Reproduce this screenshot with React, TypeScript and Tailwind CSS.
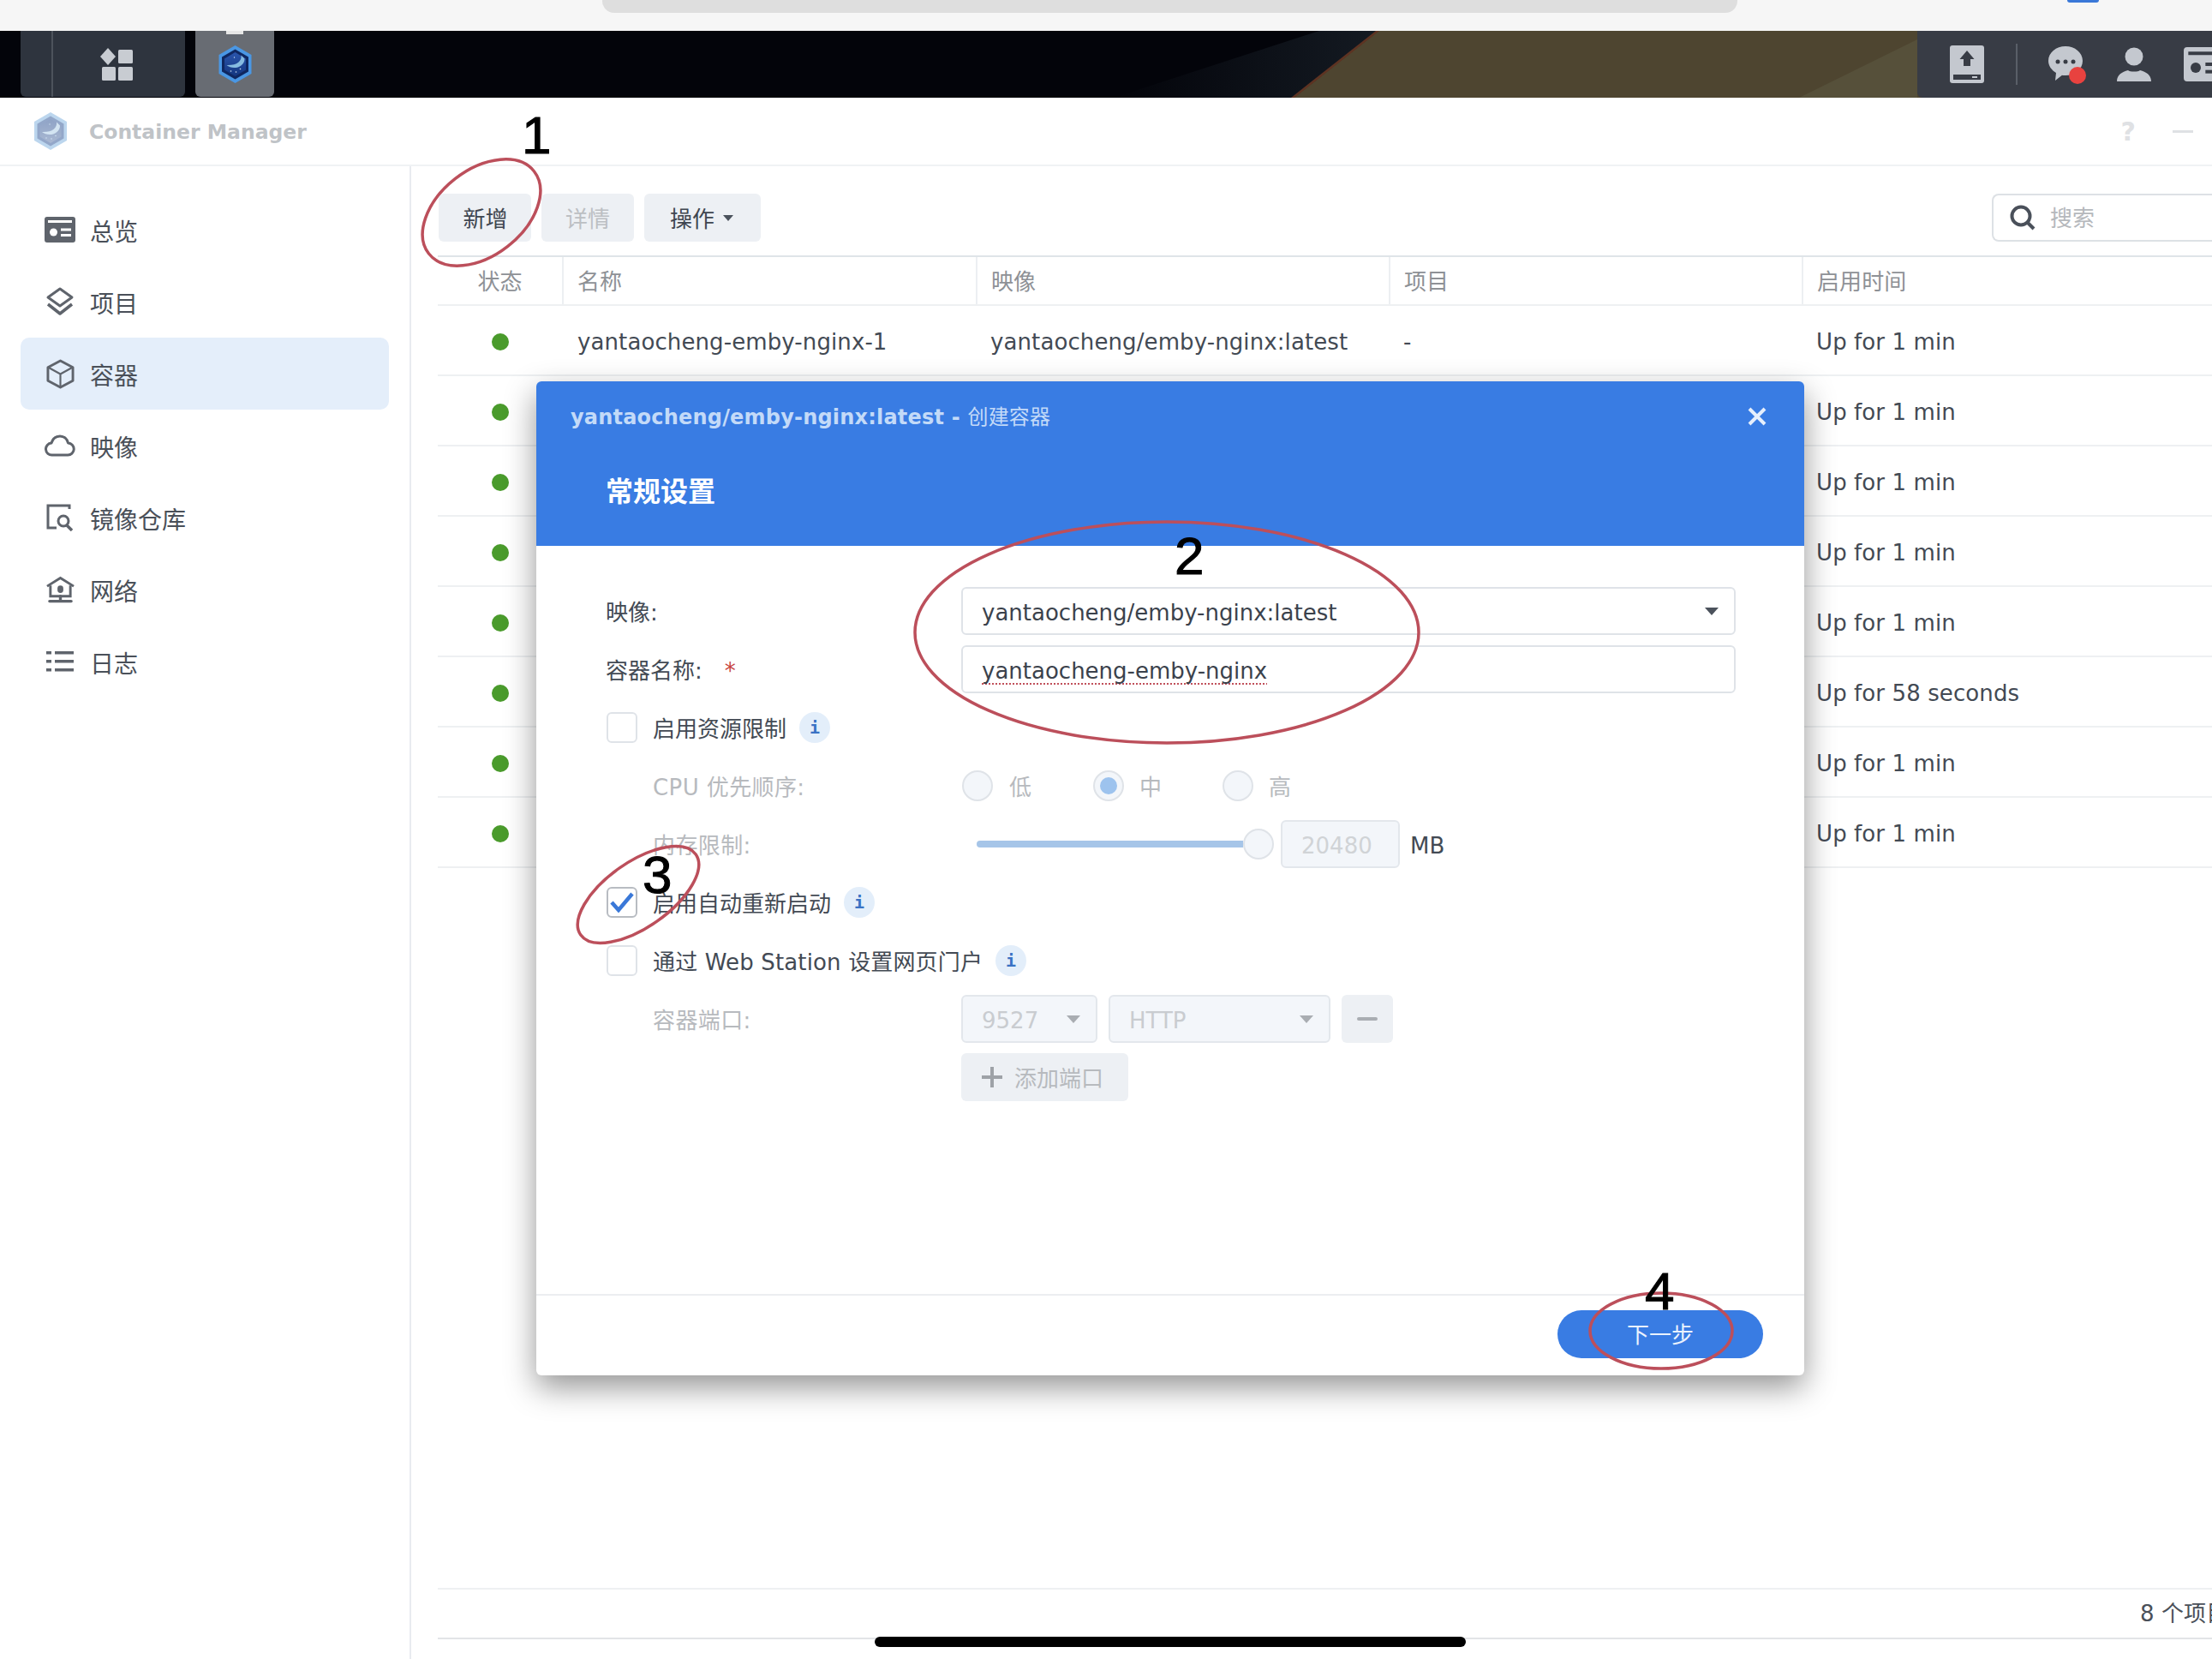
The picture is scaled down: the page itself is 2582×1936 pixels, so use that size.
import React from 'react';

const FONT = '[font-family:"DejaVu_Sans","Noto_Sans_CJK_SC",sans-serif]';

const rows = [
  { name: 'yantaocheng-emby-nginx-1', image: 'yantaocheng/emby-nginx:latest', project: '-', time: 'Up for 1 min' },
  { time: 'Up for 1 min' },
  { time: 'Up for 1 min' },
  { time: 'Up for 1 min' },
  { time: 'Up for 1 min' },
  { time: 'Up for 58 seconds' },
  { time: 'Up for 1 min' },
  { time: 'Up for 1 min' },
];

const AppLogo = ({ className, dim }: { className?: string; dim?: boolean }) => (
  <svg viewBox="0 0 40 44" className={className}>
    <defs>
      <linearGradient id={dim ? 'hexDim' : 'hexFull'} x1="0" y1="0" x2="0" y2="1">
        <stop offset="0" stopColor={dim ? '#8fa3c6' : '#2a55ac'} />
        <stop offset="1" stopColor={dim ? '#a9b8d2' : '#14367f'} />
      </linearGradient>
    </defs>
    <path d="M20 0 39 11v22L20 44 1 33V11Z" fill={dim ? '#bcd6ee' : '#4a97e4'} />
    <path d="M20 4.500 35.500 13.500v17L20 39.500 4.500 30.500v-17Z" fill={dim ? '#93a7c9' : '#0f2760'} />
    <path d="M20 8 32.500 15.500v13L20 36 7.500 28.500v-13Z" fill={`url(#${dim ? 'hexDim' : 'hexFull'})`} />
    <path d="M27 11.500c1 7-5 12-17 11.500 7 6 21 3 21-7.500Z" fill={dim ? '#d3e4f2' : '#86bbe0'} />
    <circle cx="15" cy="30" r="0.800" fill="#cfe2f2" />
    <circle cx="21" cy="31" r="0.800" fill="#cfe2f2" />
    <circle cx="26" cy="27.500" r="0.800" fill="#cfe2f2" />
    <circle cx="19" cy="14" r="0.700" fill="#cfe2f2" />
  </svg>
);

const CardIcon = ({ className, cut }: { className?: string; cut: string }) => (
  <svg viewBox="0 0 36 30" className={className} fill="currentColor">
    <path
      fillRule="evenodd"
      d="M3 0h30a3 3 0 0 1 3 3v24a3 3 0 0 1-3 3H3a3 3 0 0 1-3-3V3a3 3 0 0 1 3-3Zm1 4v3h28V4Z"
    />
    <circle cx="10.500" cy="18" r="4.500" fill={cut} />
    <rect x="19" y="13.500" width="12" height="3" fill={cut} />
    <rect x="19" y="20" width="12" height="3" fill={cut} />
  </svg>
);

const sideIcons: Record<string, React.ReactNode> = {
  overview: <CardIcon className="w-[36px] h-[30px]" cut="#ffffff" />,
  project: (
    <svg viewBox="0 0 34 34" className="w-[34px] h-[34px]" fill="none" stroke="currentColor" strokeWidth="3" strokeLinejoin="round">
      <path d="M17 2 31 12 17 22 3 12Z" />
      <path d="M3 20l14 11 14-11" strokeWidth="3.500" />
    </svg>
  ),
  container: (
    <svg viewBox="0 0 34 36" className="w-[33px] h-[35px]" fill="none" stroke="currentColor" strokeWidth="3" strokeLinejoin="round">
      <path d="M17 2 32 10v16l-15 8-15-8V10Z" />
      <path d="M2.500 10 17 18l14.500-8M17 18v16" strokeWidth="2.200" />
    </svg>
  ),
  image: (
    <svg viewBox="0 0 36 26" className="w-[36px] h-[26px]" fill="none" stroke="currentColor" strokeWidth="3" strokeLinejoin="round">
      <path d="M9 24a7 7 0 0 1-1-14C9.500 5 13.500 2 18 2c4.800 0 8.500 3.300 9.500 8a7 7 0 0 1-.5 14Z" />
    </svg>
  ),
  registry: (
    <svg viewBox="0 0 32 32" className="w-[32px] h-[32px]" fill="none" stroke="currentColor" strokeWidth="3">
      <path d="M27 6V2H2v26h10" />
      <circle cx="20" cy="20" r="6" />
      <path d="m24 25 6 6" strokeWidth="3.500" />
    </svg>
  ),
  network: (
    <svg viewBox="0 0 34 32" className="w-[33px] h-[32px]" fill="none" stroke="currentColor" strokeWidth="3">
      <path d="M1 12 17 2l16 10" />
      <path d="M5 11v13h24V11" />
      <rect x="13.500" y="11" width="7" height="9" rx="3.500" fill="currentColor" stroke="none" />
      <path d="M17 24v5M4 30h26" strokeWidth="3.500" strokeLinecap="round" />
    </svg>
  ),
  log: (
    <svg viewBox="0 0 32 24" className="w-[32px] h-[24px]" fill="currentColor">
      <rect x="0" y="0" width="6" height="3.500" />
      <rect x="10" y="0" width="22" height="3.500" />
      <rect x="0" y="10" width="6" height="3.500" />
      <rect x="10" y="10" width="22" height="3.500" />
      <rect x="0" y="20" width="6" height="3.500" />
      <rect x="10" y="20" width="22" height="3.500" />
    </svg>
  ),
};

const sideItems = [
  { key: 'overview', label: '总览' },
  { key: 'project', label: '项目' },
  { key: 'container', label: '容器', active: true },
  { key: 'image', label: '映像' },
  { key: 'registry', label: '镜像仓库' },
  { key: 'network', label: '网络' },
  { key: 'log', label: '日志' },
];

const InfoDot = () => (
  <span className="w-[36px] h-[36px] -ml-[3px] rounded-full bg-[#e3eefa] flex items-center justify-center text-[#3a72c4] text-[20px] font-bold [font-family:'DejaVu_Sans_Mono',monospace]">
    i
  </span>
);

const Checkbox = ({ checked }: { checked?: boolean }) => (
  <span
    className={`w-[36px] h-[36px] ml-[1px] shrink-0 rounded-[6px] border-2 bg-white flex items-center justify-center ${
      checked ? 'border-[#b8bcc2]' : 'border-[#dfe3e8]'
    }`}
  >
    {checked && (
      <svg viewBox="0 0 28 24" className="w-[28px] h-[24px]" fill="none" stroke="#3a78d8" strokeWidth="4.500">
        <path d="m2 12 8 9L26 2" />
      </svg>
    )}
  </span>
);

const Radio = ({ on }: { on?: boolean }) => (
  <span className="w-[36px] h-[36px] rounded-full border-2 border-[#dfe3e8] bg-[#f3f6fa] flex items-center justify-center">
    {on && <span className="w-[20px] h-[20px] rounded-full bg-[#9dc3ee]" />}
  </span>
);

const Caret = ({ color }: { color: string }) => (
  <svg viewBox="0 0 16 9" className="w-[16px] h-[9px]">
    <path d="M0 0h16L8 9Z" fill={color} />
  </svg>
);

const Row = ({ label, indent, children }: { label?: React.ReactNode; indent?: boolean; children?: React.ReactNode }) => (
  <div className="h-[56px] flex items-center">
    <div className={`w-[415px] shrink-0 pt-[4px] ${indent ? 'pl-[55px] text-[#b7babe] tracking-[0.4px]' : ''}`}>{label}</div>
    {children}
  </div>
);

const DisabledSelect = ({ value, width }: { value: string; width: string }) => (
  <div className={`${width} h-[56px] rounded-[6px] border-2 border-[#e3e7ec] bg-[#f3f6fa] pl-[22px] pr-[18px] flex items-center justify-between text-[#c9ccd0]`}>
    <span className="pt-[4px]">{value}</span>
    <Caret color="#a9adb2" />
  </div>
);

const Modal = () => (
  <div className="absolute left-[626px] top-[445px] w-[1480px] h-[1160px] rounded-[6px] bg-white shadow-[0_14px_36px_rgba(0,0,0,0.42)] flex flex-col overflow-hidden text-[26px] text-[#434a54]">
    <div className="h-[192px] shrink-0 bg-[#397ce3] relative px-[40px] pt-[27px]">
      <div className="text-[#c3daf8] text-[24px] font-bold leading-[30px] tracking-[0.2px]">
        yantaocheng/emby-nginx:latest - <span className="font-normal">创建容器</span>
      </div>
      <div className="text-white text-[32px] font-bold leading-[40px] mt-[52px] ml-[41px]">常规设置</div>
      <svg viewBox="0 0 22 22" className="absolute right-[44px] top-[30px] w-[22px] h-[22px]" stroke="#e6effc" strokeWidth="4">
        <path d="M2 2l18 18M20 2 2 20" />
      </svg>
    </div>

    <div className="flex-1 pt-[48px] pl-[81px] pr-[80px] flex flex-col gap-[12px]">
      <Row label="映像:">
        <div className="flex-1 h-[56px] rounded-[6px] border-2 border-[#dfe3e8] pl-[22px] pr-[18px] flex items-center justify-between text-[#3b424c]">
          <span className="pt-[4px]">yantaocheng/emby-nginx:latest</span>
          <Caret color="#4b525c" />
        </div>
      </Row>
      <Row label={<>容器名称:<span className="text-[#c8453f] ml-[26px]">*</span></>}>
        <div className="flex-1 h-[56px] rounded-[6px] border-2 border-[#dfe3e8] pl-[22px] flex items-center text-[#3b424c]">
          <span className="pt-[4px] underline decoration-dotted decoration-[#c0505a] decoration-2 underline-offset-[6px]">yantaocheng-emby-nginx</span>
        </div>
      </Row>
      <div className="h-[56px] flex items-center gap-[18px]">
        <Checkbox />
        <span className="pt-[4px]">启用资源限制</span>
        <InfoDot />
      </div>
      <Row indent label="CPU 优先顺序:">
        <div className="flex items-center pl-[1px] text-[#b7babe]">
          <Radio />
          <span className="ml-[19px] w-[98px] pt-[4px]">低</span>
          <Radio on />
          <span className="ml-[18px] w-[97px] pt-[4px]">中</span>
          <Radio />
          <span className="ml-[18px] pt-[4px]">高</span>
        </div>
      </Row>
      <Row indent label="内存限制:">
        <div className="flex items-center pl-[18px]">
          <div className="w-[311px] h-[8px] rounded-l-full bg-[#a6c5e8]" />
          <span className="w-[36px] h-[36px] rounded-full border-2 border-[#dfe3e8] bg-[#f3f6fa]" />
          <div className="ml-[8px] w-[139px] h-[56px] rounded-[6px] border-2 border-[#e3e7ec] bg-[#f3f6fa] pl-[22px] pt-[4px] flex items-center text-[#d0d3d6]">20480</div>
          <span className="ml-[12px] pt-[4px]">MB</span>
        </div>
      </Row>
      <div className="h-[56px] flex items-center gap-[18px]">
        <Checkbox checked />
        <span className="pt-[4px]">启用自动重新启动</span>
        <InfoDot />
      </div>
      <div className="h-[56px] flex items-center gap-[18px]">
        <Checkbox />
        <span className="pt-[4px] tracking-[0.15px]">通过 Web Station 设置网页门户</span>
        <InfoDot />
      </div>
      <Row indent label="容器端口:">
        <div className="flex items-center gap-[13px]">
          <DisabledSelect value="9527" width="w-[159px]" />
          <DisabledSelect value="HTTP" width="w-[259px]" />
          <div className="w-[60px] h-[56px] rounded-[6px] bg-[#edf0f4] flex items-center justify-center">
            <span className="w-[24px] h-[4px] rounded-full bg-[#a9adb2]" />
          </div>
        </div>
      </Row>
      <Row>
        <div className="w-[195px] h-[56px] rounded-[6px] bg-[#edf0f4] pl-[24px] flex items-center gap-[14px] text-[#b7babe]">
          <svg viewBox="0 0 24 24" className="w-[24px] h-[24px]" stroke="#9ea2a7" strokeWidth="4">
            <path d="M12 0v24M0 12h24" />
          </svg>
          <span className="pt-[4px]">添加端口</span>
        </div>
      </Row>
    </div>

    <div className="h-[95px] shrink-0 border-t-2 border-[#eceef1] pb-[4px] flex items-center justify-end pr-[48px]">
      <div className="w-[240px] h-[56px] pt-[3px] rounded-full bg-[#397ce3] text-[#eaf2fd] flex items-center justify-center">下一步</div>
    </div>
  </div>
);

export default function App() {
  return (
    <div className={`relative w-[2582px] h-[1936px] overflow-hidden bg-white flex flex-col ${FONT} text-[26px] text-[#434a54]`}>
      {/* browser bar */}
      <div className="h-[36px] shrink-0 bg-[#f6f6f6] relative">
        <div className="absolute left-[703px] top-0 w-[1325px] h-[15px] rounded-b-[14px] bg-[#dedede]" />
        <div className="absolute left-[2413px] top-0 w-[37px] h-[3px] rounded-b-[3px] bg-[#3a78d8]" />
      </div>

      {/* DSM taskbar */}
      <div className="h-[78px] shrink-0 bg-[#03040a] relative flex">
        {/* wallpaper */}
        <svg className="absolute inset-0 w-full h-full" viewBox="0 0 2582 78" preserveAspectRatio="none">
          <defs>
            <linearGradient id="wallDark" x1="0" y1="0" x2="1" y2="0">
              <stop offset="0" stopColor="#03040a" />
              <stop offset="1" stopColor="#141a22" />
            </linearGradient>
          </defs>
          <path d="M1300 78 1540 0h69l-99 78Z" fill="url(#wallDark)" />
          <path d="M1609 0H2582V78H1510Z" fill="#4e4530" />
          <path d="M1507 78 1606 0h4l-99 78Z" fill="#5e3322" />
          <path d="M2100 78 2238 10v68Z" fill="#56503a" />
        </svg>
        <div className="relative ml-[24px] w-[192px] h-[77px] rounded-b-[6px] bg-[#2e343e] flex items-center">
          <span className="ml-[36px] w-[2px] h-full bg-[#4d535c]" />
          <svg viewBox="0 0 38 38" className="ml-[55px] w-[38px] h-[38px]" fill="#c8ccd2">
            <path d="M9 0l9 10-9 10-9-10Z" />
            <rect x="21" y="2" width="17" height="16" rx="1.500" />
            <rect x="2" y="22" width="16" height="16" rx="1.500" />
            <rect x="21" y="22" width="17" height="16" rx="1.500" />
          </svg>
        </div>
        <div className="relative ml-[12px] w-[92px] h-[77px] rounded-b-[6px] bg-[#686c73] flex items-center justify-center">
          <span className="absolute top-0 left-[36px] w-[20px] h-[4px] bg-[#e6e6e6]" />
          <AppLogo className="w-[41px] h-[44px]" />
        </div>
        <div className="relative ml-auto w-[344px] rounded-bl-[6px] bg-[#383c45] pl-[38px] flex items-center text-[#c4c8cf]">
          <svg viewBox="0 0 40 44" className="shrink-0 w-[40px] h-[44px]">
            <rect width="40" height="44" rx="3" fill="#c4c8cf" />
            <path d="M20 6l8.500 10H24v8h-8v-8h-4.500Z" fill="#383c45" />
            <rect x="4" y="34" width="32" height="6" fill="#383c45" />
            <rect x="26" y="36" width="6" height="2" fill="#c4c8cf" />
          </svg>
          <span className="shrink-0 ml-[37px] w-[2px] h-[48px] bg-[#5a5f68]" />
          <div className="shrink-0 ml-[36px] w-[42px] h-[42px] relative">
            <svg viewBox="0 0 40 42" className="w-[40px] h-[42px]">
              <path d="M20 0c11 0 20 7.500 20 17s-9 17-20 17c-1.500 0-3 0-4-.3L8 40l1-9C4 28 0 23 0 17 0 7.500 9 0 20 0Z" fill="#c4c8cf" />
              <circle cx="11" cy="18" r="2.500" fill="#383c45" />
              <circle cx="20" cy="18" r="2.500" fill="#383c45" />
              <circle cx="29" cy="18" r="2.500" fill="#383c45" />
            </svg>
            <span className="absolute left-[24px] top-[24px] w-[20px] h-[20px] rounded-full bg-[#e8423f]" />
          </div>
          <svg viewBox="0 0 40 40" className="shrink-0 ml-[38px] w-[40px] h-[40px]" fill="#c4c8cf">
            <circle cx="20" cy="11" r="10.500" />
            <path d="M0 40c0-8 6-11 13-13 2 2 12 2 14 0 7 2 13 5 13 13Z" />
          </svg>
          <CardIcon className="ml-[38px] shrink-0 w-[48px] h-[40px]" cut="#383c45" />
        </div>
      </div>

      {/* application window */}
      <div className="flex-1 min-h-0 bg-white rounded-tl-[6px] flex flex-col">
        <div className="h-[80px] shrink-0 border-b-2 border-[#f0f2f4] flex items-center">
          <AppLogo dim className="ml-[39px] w-[40px] h-[44px]" />
          <span className="ml-[25px] pt-[3px] text-[23.500px] font-bold text-[#bfc3c7]">Container Manager</span>
          <span className="ml-auto text-[30px] font-bold text-[#dfe1e4]">?</span>
          <span className="ml-[43px] mr-[22px] w-[24px] h-[3px] bg-[#dfe1e4]" />
        </div>

        <div className="flex-1 min-h-0 flex">
          <aside className="w-[480px] shrink-0 border-r-2 border-[#e8ebf0] pt-[32px] px-[24px]">
            {sideItems.map((item) => (
              <div
                key={item.key}
                className={`w-[430px] h-[84px] rounded-[10px] flex items-center text-[#4a5059] ${item.active ? 'bg-[#e4eefa]' : ''}`}
              >
                <span className="w-[81px] flex justify-center pl-[11px] text-[#5f646c]">{sideIcons[item.key]}</span>
                <span className="text-[28px] pt-[7px]">{item.label}</span>
              </div>
            ))}
          </aside>

          <main className="flex-1 min-w-0 pl-[31px] flex flex-col tracking-[0.1px]">
            <div className="pt-[32px] pb-[16px] pl-[1px] flex gap-[12px]">
              <div className="w-[108px] h-[56px] pt-[4px] pl-[1px] rounded-[6px] bg-[#edf0f4] flex items-center justify-center text-[#3f4650]">新增</div>
              <div className="w-[108px] h-[56px] pt-[4px] rounded-[6px] bg-[#edf0f4] flex items-center justify-center text-[#bcbfc3]">详情</div>
              <div className="w-[136px] h-[56px] rounded-[6px] bg-[#edf0f4] pr-[2px] flex items-center justify-center gap-[10px] text-[#3f4650]">
                <span className="pt-[4px]">操作</span>
                <svg viewBox="0 0 12 7" className="w-[12px] h-[7px]"><path d="M0 0h12L6 7Z" fill="#4b525c" /></svg>
              </div>
              <div className="ml-auto w-[257px] h-[56px] rounded-l-[8px] border-2 border-r-0 border-[#dde1e5] pl-[19px] flex items-center gap-[17px] text-[#b5b8bc]">
                <svg viewBox="0 0 30 30" className="w-[30px] h-[30px]" fill="none" stroke="#4a505a" strokeWidth="4">
                  <circle cx="13" cy="13" r="10.500" />
                  <path d="m20 20 8 8" />
                </svg>
                <span className="pt-[3px]">搜索</span>
              </div>
            </div>

            <div className="grid grid-cols-[145px_483px_482px_482px_1fr] h-[59px] border-t-2 border-b-2 border-t-[#dfe4e8] border-b-[#eef0f2] text-[#8e9196] items-stretch">
              <div className="flex items-center justify-center pt-[3px]">状态</div>
              {['名称', '映像', '项目', '启用时间'].map((h) => (
                <div key={h} className="border-l-2 border-[#eceff2] pl-[16px] pt-[3px] flex items-center">{h}</div>
              ))}
            </div>

            {rows.map((r, i) => (
              <div key={i} className="grid grid-cols-[145px_483px_482px_482px_1fr] h-[82px] pt-[4px] border-b-2 border-[#eef0f2] items-center text-[#434a54]">
                <div className="flex justify-center pl-[1px]">
                  <span className="w-[20px] h-[20px] rounded-full bg-[#4a9b2c]" />
                </div>
                <div className="pl-[18px] whitespace-nowrap">{r.name}</div>
                <div className="pl-[17px] whitespace-nowrap">{r.image}</div>
                <div className="pl-[17px]">{r.project}</div>
                <div className="pl-[17px] whitespace-nowrap">{r.time}</div>
              </div>
            ))}

            <div className="flex-1" />
            <div className="h-[58px] shrink-0 border-t-2 border-[#eef0f2] pl-[1987px] flex items-center whitespace-nowrap text-[#4a5059]">8 个项目</div>
            <div className="h-[25px] shrink-0 border-t-2 border-[#e2e4e7]" />
          </main>
        </div>
      </div>

      <Modal />

      {/* hand-drawn annotations */}
      <svg className="absolute inset-0 w-[2582px] h-[1936px] pointer-events-none" viewBox="0 0 2582 1936" fill="none" stroke="#bc4f5b" strokeWidth="3.500">
        <ellipse cx="562" cy="248" rx="78" ry="50" transform="rotate(-38 562 248)" />
        <ellipse cx="1362" cy="738" rx="294" ry="129" />
        <ellipse cx="745" cy="1044" rx="82" ry="38" transform="rotate(-35 745 1044)" />
        <ellipse cx="1939" cy="1553" rx="83" ry="44" />
      </svg>
      {[
        { n: '1', cls: 'left-[609px] top-[122px]' },
        { n: '2', cls: 'left-[1371px] top-[613px]' },
        { n: '3', cls: 'left-[750px] top-[985px]' },
        { n: '4', cls: 'left-[1920px] top-[1471px]' },
      ].map((a) => (
        <span key={a.n} className={`absolute ${a.cls} text-[62px] leading-[72px] text-black [-webkit-text-stroke:1px_black] [font-family:'Liberation_Sans',sans-serif]`}>
          {a.n}
        </span>
      ))}

      {/* home indicator */}
      <div className="absolute left-[1021px] top-[1910px] w-[690px] h-[12px] rounded-full bg-black" />
    </div>
  );
}
